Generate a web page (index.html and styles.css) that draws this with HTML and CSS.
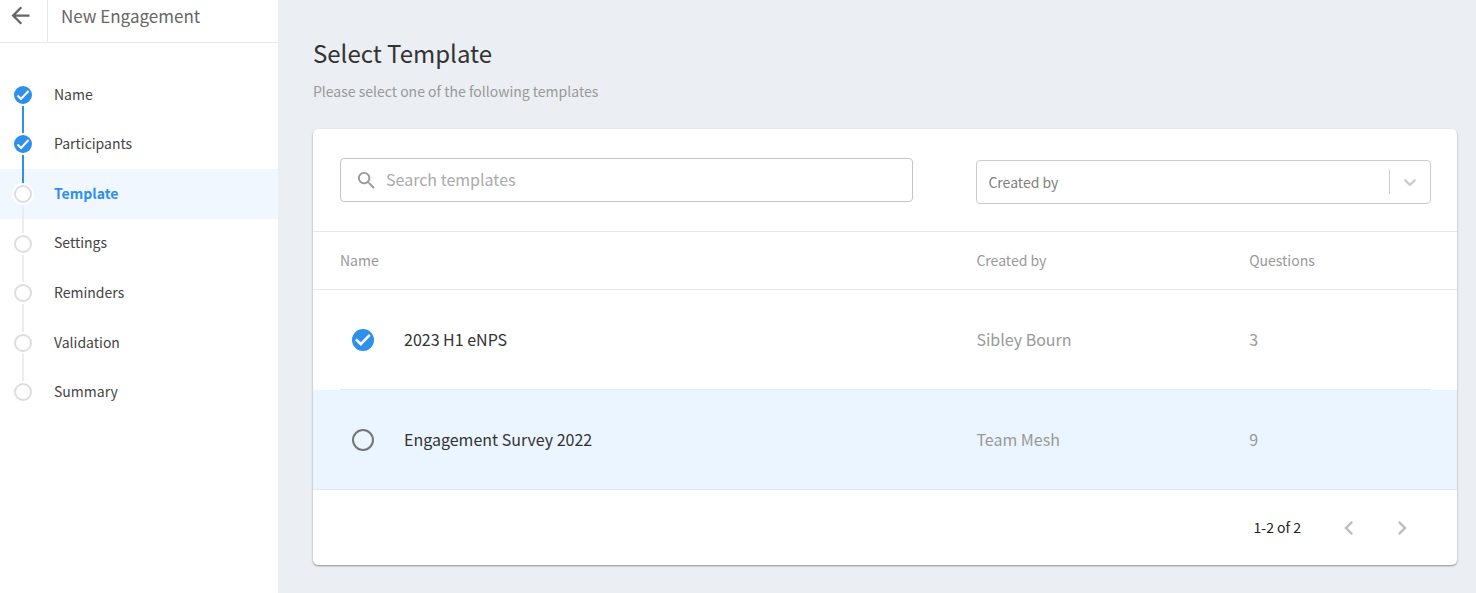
FILE: index.html
```html
<!DOCTYPE html>
<html lang="en">
	<head>
		<meta charset="UTF-8">
		<meta name="viewport" content="width=device-width, initial-scale=1">
		<title>New Engagement</title>
		<link rel="stylesheet" href="styles.css">
	</head>
	<body>
		<aside class="sidebar">
			<header class="topbar">
				<a class="back" href="#" aria-label="Back">
					<svg width="27" height="27" viewBox="0 0 24 24"><path d="M20 11H7.83l5.59-5.59L12 4l-8 8 8 8 1.41-1.41L7.83 13H20v-2z"/></svg>
				</a>
				<span class="topbar-title">New Engagement</span>
			</header>
			<ol class="steps">
				<li class="step done">
					<span class="rail">
						<svg class="dot" viewBox="0 0 22 22"><circle cx="11" cy="11" r="9"/><path d="M5.5 11.5l3.5 3.5 7.5-8"/></svg>
					</span>
					<a href="#">Name</a>
				</li>
				<li class="step done">
					<span class="rail">
						<svg class="dot" viewBox="0 0 22 22"><circle cx="11" cy="11" r="9"/><path d="M5.5 11.5l3.5 3.5 7.5-8"/></svg>
					</span>
					<a href="#">Participants</a>
				</li>
				<li class="step current">
					<span class="rail">
						<svg class="dot" viewBox="0 0 22 22"><circle cx="11" cy="11" r="8"/></svg>
					</span>
					<a href="#" aria-current="step">Template</a>
				</li>
				<li class="step">
					<span class="rail">
						<svg class="dot" viewBox="0 0 22 22"><circle cx="11" cy="11" r="8"/></svg>
					</span>
					<a href="#">Settings</a>
				</li>
				<li class="step">
					<span class="rail">
						<svg class="dot" viewBox="0 0 22 22"><circle cx="11" cy="11" r="8"/></svg>
					</span>
					<a href="#">Reminders</a>
				</li>
				<li class="step">
					<span class="rail">
						<svg class="dot" viewBox="0 0 22 22"><circle cx="11" cy="11" r="8"/></svg>
					</span>
					<a href="#">Validation</a>
				</li>
				<li class="step">
					<span class="rail">
						<svg class="dot" viewBox="0 0 22 22"><circle cx="11" cy="11" r="8"/></svg>
					</span>
					<a href="#">Summary</a>
				</li>
			</ol>
		</aside>

		<main class="content">
			<h1>Select Template</h1>
			<p class="hint">Please select one of the following templates</p>

			<section class="card">
				<div class="filters">
					<label class="search">
						<svg width="23" height="23" viewBox="0 0 24 24"><path d="M15.5 14h-.79l-.28-.27A6.47 6.47 0 0 0 16 9.5 6.5 6.5 0 1 0 9.5 16c1.61 0 3.09-.59 4.23-1.57l.27.28v.79l5 4.99L20.49 19l-4.99-5zm-6 0C7.01 14 5 11.99 5 9.5S7.01 5 9.5 5 14 7.01 14 9.5 11.99 14 9.5 14z"/></svg>
						<input type="text" placeholder="Search templates" aria-label="Search templates">
					</label>
					<div class="dropdown">
						<select aria-label="Created by">
							<option>Created by</option>
							<option>Sibley Bourn</option>
							<option>Team Mesh</option>
						</select>
						<span class="indicator">
							<svg width="20" height="20" viewBox="0 0 20 20"><path d="M4.516 7.548c0.436-0.446 1.043-0.481 1.576 0l3.908 3.747 3.908-3.747c0.533-0.481 1.141-0.446 1.574 0 0.436 0.445 0.408 1.197 0 1.615-0.406 0.418-4.695 4.502-4.695 4.502-0.217 0.223-0.502 0.335-0.787 0.335s-0.57-0.112-0.789-0.335c0 0-4.287-4.084-4.695-4.502s-0.436-1.17 0-1.615z"/></svg>
						</span>
					</div>
				</div>

				<table class="templates">
					<thead>
						<tr>
							<th>Name</th>
							<th>Created by</th>
							<th>Questions</th>
						</tr>
					</thead>
					<tbody>
						<tr>
							<td><label><input type="radio" name="template" checked>2023 H1 eNPS</label></td>
							<td>Sibley Bourn</td>
							<td>3</td>
						</tr>
						<tr class="hovered">
							<td><label><input type="radio" name="template">Engagement Survey 2022</label></td>
							<td>Team Mesh</td>
							<td>9</td>
						</tr>
					</tbody>
				</table>

				<footer class="pager">
					<span class="range">1-2 of 2</span>
					<button type="button" aria-label="Previous page" disabled>
						<svg width="28" height="28" viewBox="0 0 24 24"><path d="M15.41 7.41L14 6l-6 6 6 6 1.41-1.41L10.83 12z"/></svg>
					</button>
					<button type="button" aria-label="Next page" disabled>
						<svg width="28" height="28" viewBox="0 0 24 24"><path d="M10 6L8.59 7.41 13.17 12l-4.58 4.59L10 18l6-6z"/></svg>
					</button>
				</footer>
			</section>
		</main>
	</body>
</html>
```
FILE: styles.css
```css
*{
	box-sizing: border-box;
}
body{
	display: flex;
	min-height: 100vh;
	margin: 0;
	background: #ebeef3;
	color: #333;
	font-family: "Noto Sans CJK SC", "Noto Sans", sans-serif;
	font-size: 14px;
	line-height: 20px;
}
a{
	color: inherit;
	text-decoration: none;
}
svg{
	display: block;
	fill: currentColor;
}

/* sidebar */
.sidebar{
	flex: 0 0 278px;
	background: #fff;
}
.topbar{
	display: flex;
	height: 43px;
	border-bottom: 1px solid #e8e8e8;
	color: #666;
}
.back{
	width: 48px;
	padding: 2px 0 0 7px;
	border-right: 1px solid #e8e8e8;
}
.topbar-title{
	padding: 4px 13px;
	font-size: 17px;
	line-height: 24px;
}
.steps{
	display: grid;
	grid-auto-rows: 1fr;
	height: 347px;
	margin: 27px 0 0;
	padding: 0;
	list-style: none;
}
.step{
	display: flex;
	align-items: center;
	gap: 20px;
	padding-left: 12px;
	color: #444;
}
.step a{
	padding-bottom: 2px;
}
.rail{
	display: flex;
	flex-direction: column;
	align-items: center;
	align-self: stretch;
	width: 22px;
}
.rail:before,
.rail:after{
	content: "";
	flex: 1;
	width: 2px;
	background: #ececec;
}
.done .rail:before,
.done .rail:after,
.current .rail:before{
	background: #2f8fed;
}
.step:first-child .rail:before,
.step:last-child .rail:after{
	background: none;
}
.dot{
	width: 22px;
	height: 22px;
	border-radius: 50%;
	background: #fff;
	fill: #fff;
	stroke: #ddd;
	stroke-width: 2;
}
.done .dot circle{
	fill: #2f8fed;
	stroke: none;
}
.done .dot path{
	fill: none;
	stroke: #fff;
}
.current{
	background: #f0f7ff;
	color: #2f8fed;
	font-weight: bold;
}

/* content */
.content{
	flex: 1;
	padding: 36px 19px 28px 35px;
}
h1{
	margin: 0;
	font-size: 24px;
	font-weight: normal;
	line-height: 34px;
}
.hint{
	margin: 11px 0 28px;
	color: #999;
}
.card{
	overflow: hidden;
	border-radius: 5px;
	background: #fff;
	box-shadow: 0 1px 2px rgba(0,0,0,0.4);
}
.filters{
	display: grid;
	grid-template-columns: 7fr 5fr;
	padding: 29px 26px 27px 27px;
	border-bottom: 1px solid #e8e8e8;
}
.search{
	display: flex;
	align-items: center;
	gap: 8px;
	height: 44px;
	margin-right: 63px;
	padding: 0 14px;
	border: 1px solid #c4c4c4;
	border-radius: 4px;
	color: #999;
}
.search input{
	flex: 1;
	min-width: 0;
	padding: 0 0 2px;
	border: 0;
	outline: 0;
	color: #333;
	font: inherit;
	font-size: 16px;
}
.search input::placeholder{
	color: #aaa;
	opacity: 1;
}
.dropdown{
	position: relative;
	margin-top: 2px;
}
.dropdown select{
	display: block;
	width: 100%;
	height: 44px;
	padding: 0 50px 0 11px;
	border: 1px solid #ccc;
	border-radius: 4px;
	background: #fff;
	color: #808080;
	font: inherit;
	appearance: none;
}
.indicator{
	position: absolute;
	top: 10px;
	right: 1px;
	padding: 2px 10px;
	border-left: 1px solid #ccc;
	color: #ccc;
	pointer-events: none;
}

/* table */
.templates,
.templates thead,
.templates tbody{
	display: block;
}
.templates tr{
	display: grid;
	grid-template-columns: 7fr 3fr 2fr;
	padding: 0 26px 0 27px;
}
.templates th{
	padding: 18px 0 19px;
	color: #999;
	font-weight: normal;
	text-align: left;
}
.templates td{
	padding: 37px 0 38px;
	border-bottom: 1px solid #e8e8e8;
	color: #999;
	font-size: 16px;
	line-height: 24px;
}
.templates thead tr,
.templates tbody tr:last-child{
	border-bottom: 1px solid #e8e8e8;
}
.templates tbody tr:last-child td{
	border-bottom: 0;
}
.templates label{
	display: flex;
	align-items: center;
	gap: 30px;
	padding-left: 12px;
	color: #333;
}
.templates input{
	width: 22px;
	height: 22px;
	margin: 2px 0 0;
	border: 2px solid #757575;
	border-radius: 50%;
	appearance: none;
}
.templates input:checked{
	border: 0;
	background: #2f8fed;
}
.templates input:checked:before{
	content: "";
	display: block;
	height: 22px;
	background: #fff;
	clip-path: polygon(40% 77%, 14% 51%, 22% 43%, 40% 60%, 77% 23%, 85% 31%);
}
.hovered{
	background: #eaf5ff;
}

/* pager */
.pager{
	display: flex;
	align-items: center;
	justify-content: flex-end;
	gap: 5px;
	padding: 14px 31px 13px;
}
.range{
	margin-right: 19px;
	padding-bottom: 2px;
	color: #222;
}
.pager button{
	padding: 10px;
	border: 0;
	background: none;
	color: #bdbdbd;
}
```
